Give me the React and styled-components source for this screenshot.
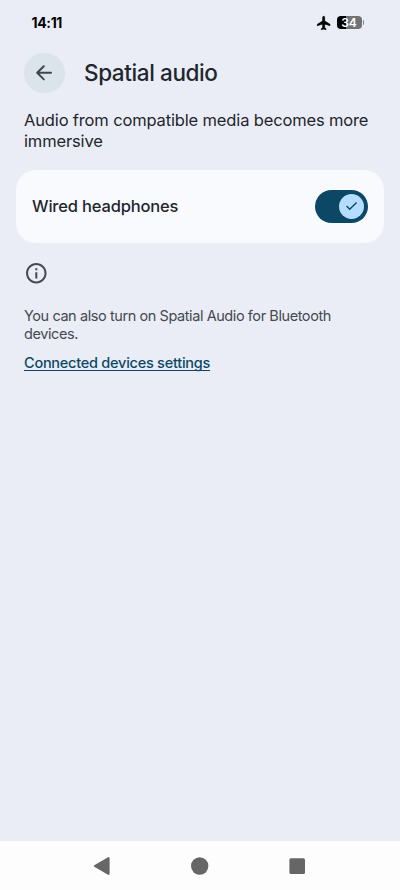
import React, { useState } from 'react';
import styled, { createGlobalStyle } from 'styled-components';

const colors = {
  background: '#eaedf5',
  card: '#f8fafe',
  text: '#1f262d',
  subText: '#454951',
  primary: '#0c4865',
  thumb: '#b5ddff',
  backButton: '#dce4eb',
  navBar: '#fdfdfd',
  navIcon: '#666666'
};

const BATTERY_LEVEL = 34;

const StatusBar = () => (
  <StatusWrapper>
    <Clock>14:11</Clock>
    <StatusIcons>
      <svg width="16" height="16" viewBox="0 0 24 24">
        <path
          d="M21 16v-2l-8-5V3.5c0-.83-.67-1.5-1.5-1.5S10 2.67 10 3.5V9l-8 5v2l8-2.5V19l-2 1.5V22l3.5-1 3.5 1v-1.5L13 19v-5.5l8 2.5z"
          stroke="#000"
          strokeWidth="1"
          strokeLinejoin="round"
        />
      </svg>
      <Battery>
        <BatteryBody style={{ '--level': `${BATTERY_LEVEL}%` }}>
          <BatteryText>{BATTERY_LEVEL}</BatteryText>
        </BatteryBody>
        <BatteryCap />
      </Battery>
    </StatusIcons>
  </StatusWrapper>
);

const Header = () => (
  <HeaderWrapper>
    <BackButton aria-label="Back">
      <svg width="24" height="24" viewBox="0 0 24 24" fill="none">
        <path
          d="M19 11.8H5.6M11.8 5.2L5.2 11.8l6.6 6.6"
          stroke="#3f464d"
          strokeWidth="2"
          strokeLinecap="round"
          strokeLinejoin="round"
        />
      </svg>
    </BackButton>
    <Title>Spatial audio</Title>
  </HeaderWrapper>
);

const NavigationBar = () => (
  <NavWrapper>
    <svg width="20" height="20" viewBox="0 0 20 20">
      <path d="M2.3 9.2L15.6 1.4Q17.6.4 17.6 2.6v14.8q0 2.2-2 1.2L2.3 10.8q-1.2-.8 0-1.6z" />
    </svg>
    <svg width="20" height="20" viewBox="0 0 20 20">
      <circle cx="9.7" cy="10" r="8.7" />
    </svg>
    <svg width="20" height="20" viewBox="0 0 20 20">
      <rect x="2.4" y="2.3" width="15.6" height="15.6" rx="1.5" />
    </svg>
  </NavWrapper>
);

const App = () => {
  const [enabled, setEnabled] = useState(true);

  return (
    <Screen>
      <GlobalStyle />
      <StatusBar />
      <Header />
      <Description>
        <Line>Audio from compatible media becomes more</Line>
        <Line>immersive</Line>
      </Description>
      <Card>
        <CardTitle>Wired headphones</CardTitle>
        <Switch
          role="switch"
          aria-label="Wired headphones"
          aria-checked={enabled}
          $on={enabled}
          onClick={() => setEnabled(!enabled)}
        >
          <Thumb>
            <svg width="16" height="16" viewBox="0 0 16 16" fill="none">
              <path d="M2.6 8l3.1 3.2 6.9-6.7" stroke={colors.primary} strokeWidth="1.4" />
            </svg>
          </Thumb>
        </Switch>
      </Card>
      <Footer>
        <InfoIcon width="24.6" height="24.6" viewBox="0 0 24 24">
          <path d="M11 7h2v2h-2zm0 4h2v6h-2zm1-9C6.48 2 2 6.48 2 12s4.48 10 10 10 10-4.48 10-10S17.52 2 12 2zm0 18c-4.41 0-8-3.59-8-8s3.59-8 8-8 8 3.59 8 8-3.59 8-8 8z" />
        </InfoIcon>
        <FooterText>
          <Line>You can also turn on Spatial Audio for Bluetooth</Line>
          <Line>devices.</Line>
        </FooterText>
        <SettingsLink href="#">Connected devices settings</SettingsLink>
      </Footer>
      <NavigationBar />
    </Screen>
  );
};

const GlobalStyle = createGlobalStyle`
  * {
    box-sizing: border-box;
  }
  body {
    margin: 0;
    background-color: ${colors.background};
    font-family: Inter, Roboto, sans-serif;
  }
  svg {
    display: block;
    flex-shrink: 0;
  }
`;

const Screen = styled.div`
  display: flex;
  flex-direction: column;
  width: 400px;
  height: 890px;
  overflow: hidden;
  color: ${colors.text};
  background-color: ${colors.background};
`;

const StatusWrapper = styled.div`
  display: flex;
  align-items: center;
  justify-content: space-between;
  height: 45px;
  padding: 0 36px 0 31.5px;
`;

const Clock = styled.span`
  padding-bottom: 1px;
  font-size: 14px;
  font-weight: 700;
  letter-spacing: -0.35px;
  color: #000;
`;

const StatusIcons = styled.div`
  display: flex;
  align-items: center;
  gap: 5px;
`;

const Battery = styled.div`
  display: flex;
  align-items: center;
  gap: 1px;
`;

const BatteryBody = styled.div`
  display: flex;
  align-items: center;
  justify-content: center;
  width: 25px;
  height: 13px;
  border-radius: 4px;
  background: linear-gradient(to right, #000 var(--level), #707276 var(--level));
`;

const BatteryText = styled.span`
  font-size: 12px;
  font-weight: 600;
  line-height: 13px;
  letter-spacing: -0.1px;
  color: #fff;
`;

const BatteryCap = styled.span`
  width: 1.5px;
  height: 5px;
  border-radius: 0 2px 2px 0;
  background-color: #85878b;
`;

const HeaderWrapper = styled.header`
  display: flex;
  align-items: center;
  gap: 19.5px;
  height: 56px;
  padding-left: 24px;
`;

const BackButton = styled.button`
  display: flex;
  align-items: center;
  justify-content: center;
  width: 40.5px;
  height: 40.5px;
  padding: 0;
  border: 0;
  border-radius: 50%;
  background-color: ${colors.backButton};
`;

const Title = styled.h1`
  margin: 0;
  padding-bottom: 1px;
  font-size: 22.5px;
  font-weight: 450;
  line-height: 28px;
  letter-spacing: -0.4px;
`;

const Description = styled.div`
  padding: 9px 24px 0;
  font-size: 16.5px;
  line-height: 21px;
  letter-spacing: -0.15px;
`;

const Line = styled.div`
  white-space: nowrap;
`;

const Card = styled.section`
  display: flex;
  align-items: center;
  justify-content: space-between;
  height: 73px;
  margin: 17.5px 16px 0;
  padding: 0 16px;
  border-radius: 20px;
  background-color: ${colors.card};
`;

const CardTitle = styled.span`
  font-size: 16.5px;
  font-weight: 500;
  letter-spacing: -0.17px;
`;

const Switch = styled.button`
  display: flex;
  align-items: center;
  justify-content: ${({ $on }) => ($on ? 'flex-end' : 'flex-start')};
  width: 53px;
  height: 33px;
  padding: 0 4px;
  border: 0;
  border-radius: 17px;
  background-color: ${colors.primary};
`;

const Thumb = styled.span`
  display: flex;
  align-items: center;
  justify-content: center;
  width: 25px;
  height: 25px;
  border-radius: 50%;
  background-color: ${colors.thumb};
`;

const Footer = styled.section`
  display: flex;
  flex: 1;
  flex-direction: column;
  align-items: flex-start;
  padding: 18px 24px 0;
  color: ${colors.subText};
`;

const InfoIcon = styled.svg`
  fill: ${colors.subText};
`;

const FooterText = styled.div`
  margin-top: 22px;
  font-size: 14.5px;
  line-height: 18px;
  letter-spacing: -0.42px;
`;

const SettingsLink = styled.a`
  margin-top: 11px;
  font-size: 14.5px;
  font-weight: 500;
  line-height: 18px;
  letter-spacing: -0.25px;
  text-decoration-thickness: 1px;
  text-underline-offset: 2px;
  text-decoration-skip-ink: none;
  color: ${colors.primary};
`;

const NavWrapper = styled.nav`
  display: flex;
  align-items: center;
  justify-content: space-between;
  height: 48.6px;
  padding: 0 93px 0 92px;
  background-color: ${colors.navBar};
  fill: ${colors.navIcon};
`;

export default App;
